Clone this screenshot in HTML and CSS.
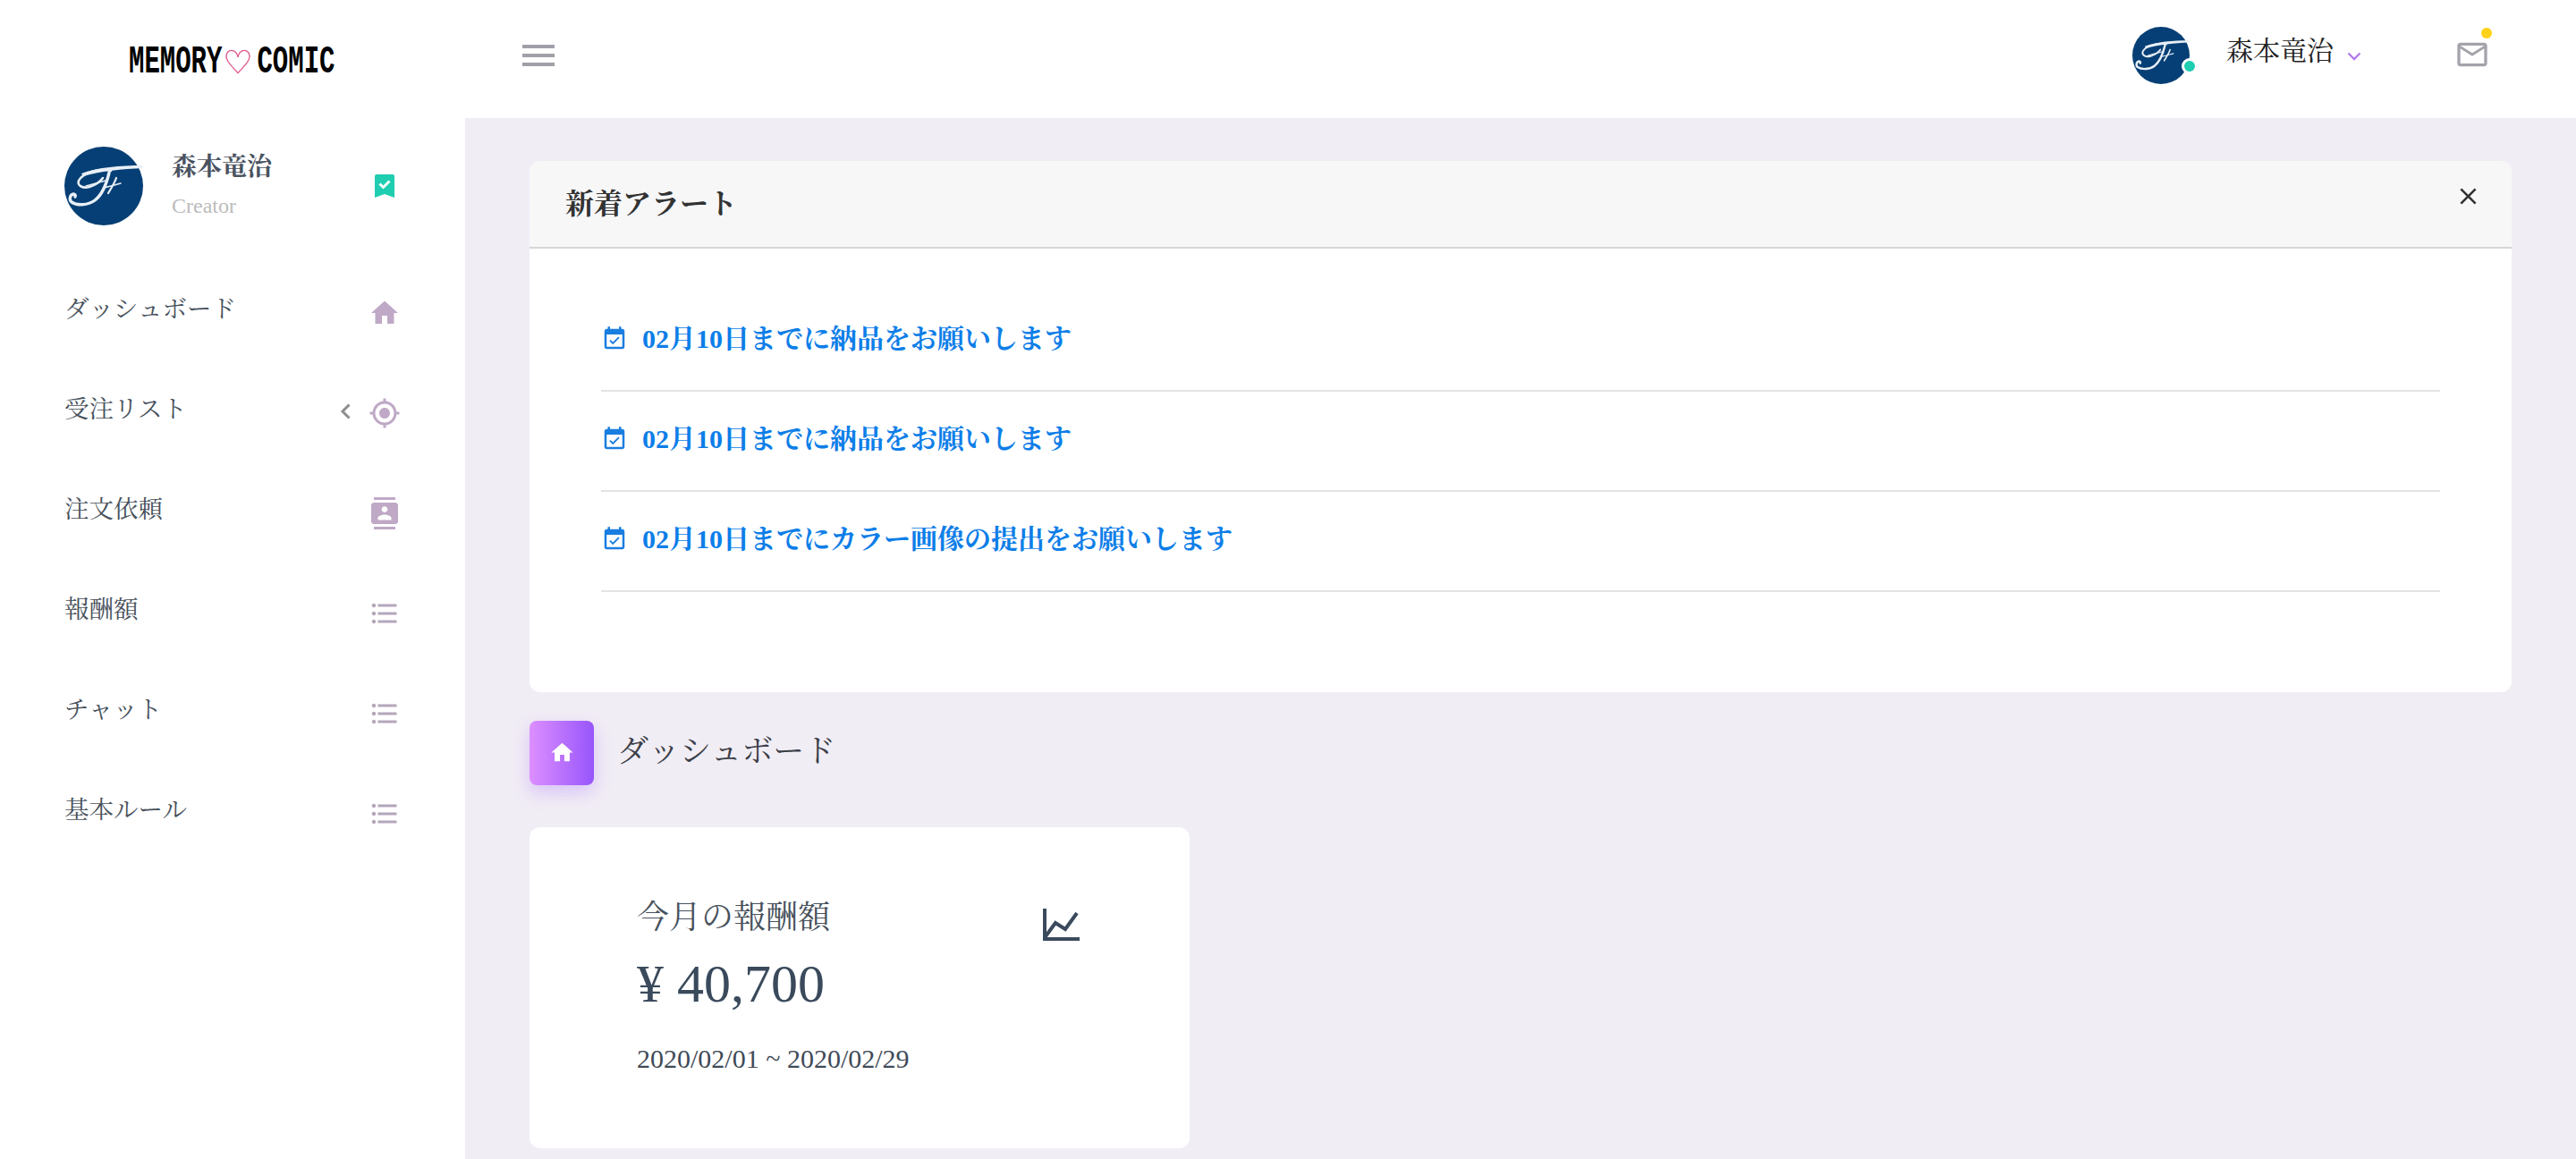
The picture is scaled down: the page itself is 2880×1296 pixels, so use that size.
FILE: index.html
```html
<!DOCTYPE html>
<html lang="ja">
<head>
<meta charset="utf-8">
<title>ダッシュボード</title>
<link rel="stylesheet" href="styles.css">
</head>
<body>
<svg class="defs" width="0" height="0" aria-hidden="true">
  <defs>
    <symbol id="avatar" viewBox="0 0 88 88">
      <circle cx="44" cy="44" r="44" fill="#063f75"/>
      <path d="M19 30C38 23 62 21 87 21l1 3C64 25 42 27 21 33z" fill="#e8eff6"/>
      <g fill="none" stroke="#e8eff6" stroke-linecap="round">
        <path d="M52 27C38 23 20 30 16 38c-2 6 5 9 12 7 7-2 12-6 15-10" stroke-width="2.6"/>
        <path d="M50 29C47 42 42 54 34 60c-8 6-20 6-26 2-3-3-2-8 2-9 2 0 3 2 2 3" stroke-width="3.4"/>
        <path d="M24 44c8-2 14-4 22-6" stroke-width="1.4"/>
        <path d="M58 35c-2 6-6 12-9 17" stroke-width="2.2"/>
        <path d="M44 46c6-1 12-3 19-5" stroke-width="1.6"/>
      </g>
    </symbol>
    <symbol id="i-home" viewBox="0 0 24 24"><path d="M10 20v-6h4v6h5v-8h3L12 3 2 12h3v8z"/></symbol>
    <symbol id="i-gps" viewBox="0 0 24 24"><path d="M12 8c-2.21 0-4 1.79-4 4s1.79 4 4 4 4-1.79 4-4-1.79-4-4-4zm8.94 3c-.46-4.17-3.77-7.48-7.94-7.94V1h-2v2.06C6.83 3.52 3.52 6.83 3.06 11H1v2h2.06c.46 4.17 3.77 7.48 7.94 7.94V23h2v-2.06c4.17-.46 7.48-3.77 7.94-7.94H23v-2h-2.06zM12 19c-3.87 0-7-3.13-7-7s3.13-7 7-7 7 3.13 7 7-3.13 7-7 7z"/></symbol>
    <symbol id="i-contacts" viewBox="0 0 24 24"><path d="M20 0H4v2h16V0zM4 24h16v-2H4v2zM20 4H4c-1.1 0-2 .9-2 2v12c0 1.1.9 2 2 2h16c1.1 0 2-.9 2-2V6c0-1.1-.9-2-2-2zm-8 2.75c1.24 0 2.25 1.01 2.25 2.25s-1.01 2.25-2.25 2.25S9.75 10.24 9.75 9 10.76 6.75 12 6.75zM17 17H7v-1.5c0-1.67 3.33-2.5 5-2.5s5 .83 5 2.5V17z"/></symbol>
    <symbol id="i-list" viewBox="0 0 24 24"><path d="M4 10.5c-.83 0-1.5.67-1.5 1.5s.67 1.5 1.5 1.5 1.5-.67 1.5-1.5-.67-1.5-1.5-1.5zm0-6c-.83 0-1.5.67-1.5 1.5S3.17 7.5 4 7.5 5.5 6.83 5.5 6 4.83 4.5 4 4.5zm0 12c-.83 0-1.5.68-1.5 1.5s.68 1.5 1.5 1.5 1.5-.68 1.5-1.5-.67-1.5-1.5-1.5zM7 19h14v-2H7v2zm0-6h14v-2H7v2zm0-8v2h14V5H7z"/></symbol>
    <symbol id="i-event" viewBox="0 0 24 24"><path d="M16.53 11.06L15.47 10l-4.88 4.88-2.12-2.12-1.06 1.06L10.59 17l5.94-5.94zM19 3h-1V1h-2v2H8V1H6v2H5c-1.11 0-1.99.9-1.99 2L3 19c0 1.1.89 2 2 2h14c1.1 0 2-.9 2-2V5c0-1.1-.9-2-2-2zm0 16H5V8h14v11z"/></symbol>
  </defs>
</svg>

<header class="topbar">
  <div class="brand">
    <span class="logo"><span class="logo-word">MEMORY</span><svg class="logo-heart" viewBox="0 0 30 30"><path d="M15 28C9 21 1 15 1 8c0-4 3-7 6-7 4 0 7 3 8 8 1-5 4-8 8-8 3 0 6 3 6 7 0 7-8 13-14 20z" fill="none" stroke="#e2558c" stroke-width="1.4"/></svg><span class="logo-word">COMIC</span></span>
  </div>
  <button class="menu-toggle" aria-label="menu"><i></i><i></i><i></i></button>
  <div class="topbar-right">
    <div class="user-avatar">
      <svg class="fill"><use href="#avatar"/></svg>
      <span class="online"></span>
    </div>
    <span class="user-name">森本竜治</span>
    <svg class="user-chevron" viewBox="0 0 16 10"><path d="M1.5 1.5 8 8l6.5-6.5" fill="none" stroke="#b57bee" stroke-width="2.4"/></svg>
    <div class="mail">
      <svg class="mail-icon" viewBox="0 0 24 24"><path d="M20 4H4c-1.1 0-1.99.9-1.99 2L2 18c0 1.1.9 2 2 2h16c1.1 0 2-.9 2-2V6c0-1.1-.9-2-2-2zm0 14H4V8l8 5 8-5v10zm-8-7L4 6h16l-8 5z"/></svg>
      <span class="mail-dot"></span>
    </div>
  </div>
</header>

<div class="layout">
  <aside class="sidebar">
    <div class="profile">
      <svg class="profile-avatar"><use href="#avatar"/></svg>
      <div class="profile-info">
        <div class="profile-name">森本竜治</div>
        <div class="profile-role">Creator</div>
      </div>
      <svg class="profile-badge" viewBox="0 0 22 26"><path d="M2 0h18a2 2 0 0 1 2 2v24l-11-4-11 4V2a2 2 0 0 1 2-2z" fill="#1fcdb0"/><path d="M5.5 10.5l4 4 7-7" fill="none" stroke="#fff" stroke-width="3"/></svg>
    </div>
    <nav class="nav">
      <a class="nav-row"><span class="nav-text">ダッシュボード</span><svg class="nav-icon"><use href="#i-home"/></svg></a>
      <a class="nav-row"><span class="nav-text">受注リスト</span><svg class="nav-chevron" viewBox="0 0 12 18"><path d="M10.5 1.5 3 9l7.5 7.5" fill="none" stroke="#8e8e8e" stroke-width="3"/></svg><svg class="nav-icon"><use href="#i-gps"/></svg></a>
      <a class="nav-row"><span class="nav-text">注文依頼</span><svg class="nav-icon"><use href="#i-contacts"/></svg></a>
      <a class="nav-row"><span class="nav-text">報酬額</span><svg class="nav-icon muted"><use href="#i-list"/></svg></a>
      <a class="nav-row"><span class="nav-text">チャット</span><svg class="nav-icon muted"><use href="#i-list"/></svg></a>
      <a class="nav-row"><span class="nav-text">基本ルール</span><svg class="nav-icon muted"><use href="#i-list"/></svg></a>
    </nav>
  </aside>

  <main class="main">
    <section class="alert">
      <div class="alert-head">
        <h2 class="alert-title">新着アラート</h2>
        <svg class="alert-close" viewBox="0 0 24 24"><path d="M19 6.41L17.59 5 12 10.59 6.41 5 5 6.41 10.59 12 5 17.59 6.41 19 12 13.41 17.59 19 19 17.59 13.41 12z"/></svg>
      </div>
      <ul class="alert-list">
        <li class="alert-row"><svg class="alert-icon"><use href="#i-event"/></svg><span>02月10日までに納品をお願いします</span></li>
        <li class="alert-row"><svg class="alert-icon"><use href="#i-event"/></svg><span>02月10日までに納品をお願いします</span></li>
        <li class="alert-row"><svg class="alert-icon"><use href="#i-event"/></svg><span>02月10日までにカラー画像の提出をお願いします</span></li>
      </ul>
    </section>

    <div class="page-title">
      <span class="page-tile"><svg class="page-tile-icon"><use href="#i-home"/></svg></span>
      <h1 class="page-heading">ダッシュボード</h1>
    </div>

    <section class="stat">
      <div class="stat-body">
        <div class="stat-label">今月の報酬額</div>
        <div class="stat-value">¥ 40,700</div>
        <div class="stat-range">2020/02/01 ~ 2020/02/29</div>
      </div>
      <svg class="stat-icon" viewBox="0 0 41 36"><path d="M2 0v34h39M3 31l11-15 11 7L38 5" fill="none" stroke="#3a4a5c" stroke-width="4"/></svg>
    </section>
  </main>
</div>
</body>
</html>
```
FILE: styles.css
```css
* { box-sizing: border-box; }
html, body { margin: 0; height: 100%; }
body {
  width: 2880px;
  height: 1296px;
  overflow: hidden;
  display: flex;
  flex-direction: column;
  background: #fff;
  font-family: "Liberation Serif", "Noto Serif CJK JP", "Noto Sans CJK JP", serif;
  color: #3f4a58;
}
.defs { position: absolute; }
h1, h2, ul { margin: 0; padding: 0; font-weight: normal; }
li { list-style: none; }

.topbar { height: 132px; flex: none; display: flex; align-items: center; background: #fff; }
.brand { width: 584px; padding: 0 0 0 144px; flex: none; }
.logo { display: flex; align-items: center; height: 30px; margin-top: 7px; }
.logo-word {
  display: block;
  font-family: "Liberation Mono", monospace;
  font-weight: bold;
  font-size: 29px;
  line-height: 30px;
  color: #000;
  transform: scaleY(1.5);
}
.logo-heart { width: 28px; height: 29px; flex: none; margin: 0 7px 0 4px; }
.menu-toggle {
  width: 36px; height: 24px; padding: 0; margin: -8px 0 0; border: 0; background: none;
  display: flex; flex-direction: column; justify-content: space-between;
}
.menu-toggle i { display: block; height: 4px; background: #a0a0a8; }
.topbar-right { margin-left: auto; display: flex; align-items: center; padding-right: 99px; margin-top: -8px; }
.user-avatar { position: relative; width: 64px; height: 64px; }
.fill { width: 100%; height: 100%; display: block; }
.online {
  position: absolute; right: -9px; bottom: 11px;
  width: 18px; height: 18px; border-radius: 50%;
  background: #1fcdb0; border: 3px solid #fff;
}
.user-name { margin-left: 41px; font-size: 30px; line-height: 36px; color: #222; margin-top: -10px; }
.user-chevron { width: 16px; height: 10px; margin: 2px 0 0 15px; }
.mail { position: relative; width: 34px; height: 26px; margin: -2px 0 0 107px; }
.mail-icon { position: absolute; left: -3px; top: -7px; width: 40px; height: 40px; fill: #a3a3ab; }
.mail-dot { position: absolute; right: -5px; top: -17px; width: 12px; height: 12px; border-radius: 50%; background: #ffd21a; }

.layout { flex: 1; display: flex; min-height: 0; }
.sidebar { width: 520px; flex: none; background: #fff; }
.profile { display: flex; padding: 32px 0 0 72px; height: 162px; align-items: flex-start; }
.profile-avatar { width: 88px; height: 88px; flex: none; }
.profile-info { width: 227px; margin-left: 32px; }
.profile-name { font-size: 28px; line-height: 36px; margin-top: 5px; font-weight: bold; color: #4a5361; }
.profile-role { font-size: 24px; line-height: 30px; margin-top: 10px; color: #bcbcbc; }
.profile-badge { width: 22px; height: 26px; margin-top: 31px; flex: none; }

.nav { display: flex; flex-direction: column; }
.nav-row { height: 112px; display: flex; align-items: center; padding: 0 72px 0 72px; }
.nav-text { font-size: 27.5px; line-height: 36px; margin: -8px auto 0 0; color: #48515c; }
.nav-chevron { width: 12px; height: 18px; margin: -4px 20px 0 0; }
.nav-icon { width: 36px; height: 36px; flex: none; fill: #bfa9c6; }
.nav-icon.muted { fill: #b3a6ba; }

.main { flex: 1; background: #f1edf5; padding: 48px 72px 0; min-width: 0; }
.alert { height: 594px; background: #fff; border-radius: 12px; overflow: hidden; }
.alert-head {
  height: 98px; background: #f7f7f8; border-bottom: 2px solid #d6d6d8;
  display: flex; justify-content: space-between; align-items: flex-start;
  padding: 0 33px 0 40px;
}
.alert-title { font-size: 32px; line-height: 40px; margin-top: 28px; font-weight: bold; color: #333; }
.alert-close { width: 31px; height: 31px; margin-top: 24px; fill: #333; }
.alert-list { padding: 48px 80px 0; }
.alert-row {
  height: 112px; padding-bottom: 10px; border-bottom: 2px solid #e3e3e3;
  display: flex; align-items: center; gap: 16px;
  font-size: 30px; font-weight: bold; color: #0d7ee8;
}
.alert-icon { width: 30px; height: 30px; margin-top: 6px; fill: #1a7ee0; flex: none; }

.page-title { margin-top: 32px; display: flex; align-items: flex-start; gap: 26px; }
.page-tile {
  width: 72px; height: 72px; border-radius: 8px; flex: none;
  background: linear-gradient(90deg, #dd8fff, #9755fb);
  box-shadow: 0 8px 20px rgba(151, 85, 251, .28);
  display: flex; align-items: center; justify-content: center;
}
.page-tile-icon { width: 29px; height: 29px; fill: #fff; margin-bottom: 2px; }
.page-heading { font-size: 35px; line-height: 44px; margin-top: 13px; color: #3c3f48; }

.stat {
  width: 738px; height: 359px; margin-top: 47px; background: #fff; border-radius: 12px;
  display: flex; justify-content: space-between; align-items: flex-start;
  padding: 78px 123px 0 120px;
}
.stat-label { font-size: 36px; line-height: 46px; color: #48515c; }
.stat-value { font-size: 60px; line-height: 70px; margin-top: 16px; color: #3a4a5c; }
.stat-range { font-size: 30px; line-height: 40px; margin-top: 29px; color: #3f4a58; }
.stat-icon { width: 41px; height: 36px; margin-top: 13px; flex: none; }
```
